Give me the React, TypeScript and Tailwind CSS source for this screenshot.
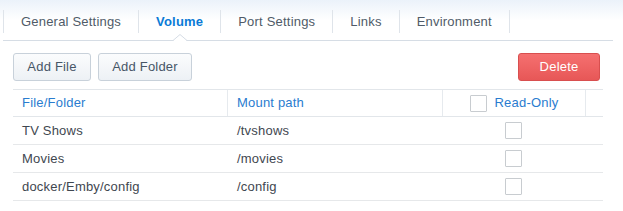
import React from "react";

const tabs = ["General Settings", "Volume", "Port Settings", "Links", "Environment"];

const rows = [
  { file: "TV Shows", mount: "/tvshows" },
  { file: "Movies", mount: "/movies" },
  { file: "docker/Emby/config", mount: "/config" },
];

function Box() {
  return <span className="block w-[17px] h-[17px] border border-[#c8ccd0] bg-white rounded-[1px]" />;
}

export default function App() {
  return (
    <div
      className="w-[623px] h-[211px] bg-white overflow-hidden tracking-[0.2px]"
      style={{ fontFamily: "'Liberation Sans', Arial, sans-serif" }}
    >
      <div className="bg-gradient-to-b from-[#ebf2fa] via-white to-white">
        <div className="ml-[3px] w-[610px] h-[41px] pt-[10px] border-b border-[#d6dde5] flex items-start">
          {tabs.map((t, i) => (
            <div key={t} className="relative h-full flex items-start">
              <div
                className={
                  "h-[23px] px-[17px] flex items-center text-[13px] border-r border-[#dfe4ea] " +
                  (i === 0 ? "border-l " : "") +
                  (t === "Volume" ? "font-bold text-[#0a7bd6]" : "text-[#4f5b68]")
                }
              >
                {t}
              </div>
              {t === "Volume" && (
                <svg
                  className="absolute bottom-[-1px] left-1/2 -translate-x-1/2"
                  width="14"
                  height="7"
                  viewBox="0 0 14 7"
                >
                  <polygon points="0,7 7,0.5 14,7" fill="#ffffff" />
                  <polyline points="0,6.5 7,0.5 14,6.5" fill="none" stroke="#d6dde5" strokeWidth="1" />
                </svg>
              )}
            </div>
          ))}
        </div>
      </div>

      <div className="flex items-center pl-[13px] pr-[23px] mt-[12px]">
        <button className="w-[78px] h-[28px] rounded-[3px] border border-[#c8d1da] bg-gradient-to-b from-[#fbfcfd] to-[#edf1f5] text-[13px] text-[#475667]">
          Add File
        </button>
        <button className="ml-[7px] w-[94px] h-[28px] rounded-[3px] border border-[#c8d1da] bg-gradient-to-b from-[#fbfcfd] to-[#edf1f5] text-[13px] text-[#475667]">
          Add Folder
        </button>
        <button className="ml-auto w-[82px] h-[28px] rounded-[3px] border border-[#d84f4f] bg-gradient-to-b from-[#f57070] to-[#e75757] text-[13px] text-white">
          Delete
        </button>
      </div>

      <div className="ml-[13px] mt-[8px] w-[590px] text-[13px]">
        <div className="grid grid-cols-[215px_215px_143px_17px] h-[28px] border-t border-b border-[#e2e6ea] text-[#2a7ccf]">
          <div className="flex items-center pl-[9px] border-r border-[#e6eaee]">File/Folder</div>
          <div className="flex items-center pl-[9px] border-r border-[#e6eaee]">Mount path</div>
          <div className="flex items-center justify-center gap-[8px] border-r border-[#e6eaee]">
            <Box />
            <span>Read-Only</span>
          </div>
          <div />
        </div>
        {rows.map((r) => (
          <div
            key={r.file}
            className="grid grid-cols-[215px_215px_143px_17px] h-[28px] border-b border-[#e6e8ea] text-[#3f4750]"
          >
            <div className="flex items-center pl-[9px] pt-[1px]">{r.file}</div>
            <div className="flex items-center pl-[9px] pt-[1px]">{r.mount}</div>
            <div className="flex items-center justify-center pr-[2px]">
              <Box />
            </div>
            <div />
          </div>
        ))}
      </div>
    </div>
  );
}
